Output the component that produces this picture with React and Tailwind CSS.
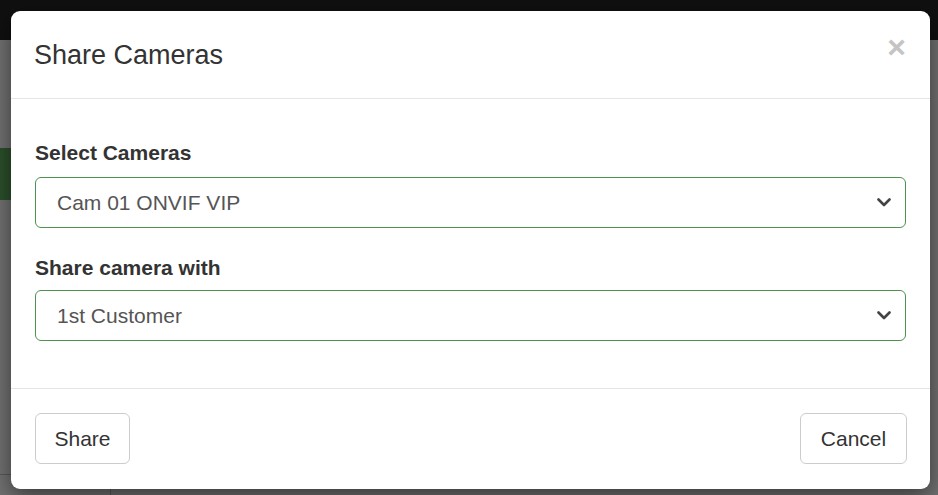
import React from "react";

function Chevron() {
  return (
    <svg width="14" height="9" viewBox="0 0 14 9" className="shrink-0">
      <path d="M1.5 1.5 L7 7 L12.5 1.5" fill="none" stroke="#444" strokeWidth="2.6" strokeLinecap="round" strokeLinejoin="round" />
    </svg>
  );
}

function SelectBox({ value }) {
  return (
    <div className="flex h-[51px] items-center justify-between rounded-[6px] border border-[#4f914f] pl-[21px] pr-[14px] text-[21px] text-[#555]">
      <span>{value}</span>
      <Chevron />
    </div>
  );
}

export default function App() {
  return (
    <div
      className="relative h-[495px] w-[938px] overflow-hidden bg-[#717171]"
      style={{ fontFamily: '"Liberation Sans", Arial, sans-serif' }}
    >
      {/* background page (dimmed) */}
      <div className="flex h-full flex-col">
        <div className="h-[40px] bg-[#101010]" />
        <div className="flex flex-1">
          <div className="flex w-[11px] flex-col">
            <div className="h-[108px]" />
            <div className="h-[52px] bg-[#2b4f2a]" />
            <div className="h-[274px]" />
            <div className="h-[1px] bg-[#585858]" />
          </div>
          <div className="flex-1" />
        </div>
        <div className="flex h-[6px]">
          <div className="w-[110px]" />
          <div className="w-[1px] bg-[#585858]" />
        </div>
      </div>

      {/* modal */}
      <div className="absolute left-[11px] top-[11px] flex h-[478px] w-[919px] flex-col rounded-[9px] bg-white shadow-[0_7px_22px_rgba(0,0,0,0.5)]">
        <div className="flex h-[88px] items-center justify-between border-b border-[#e5e5e5] pl-[23px] pr-[24px]">
          <span className="text-[27px] leading-[38px] text-[#333]">Share Cameras</span>
          <span className="mb-[16px] text-[32px] font-bold leading-none text-[#c4c4c4]">×</span>
        </div>

        <div className="flex flex-col px-[24px] pb-[47px] pt-[39px]">
          <div className="mb-[9px] text-[21px] font-bold leading-[30px] text-[#333]">Select Cameras</div>
          <SelectBox value="Cam 01 ONVIF VIP" />
          <div className="mb-[7px] mt-[25px] text-[21px] font-bold leading-[30px] text-[#333]">Share camera with</div>
          <SelectBox value="1st Customer" />
        </div>

        <div className="flex items-start justify-between border-t border-[#e5e5e5] pl-[24px] pr-[23px] pt-[24px]">
          <button className="flex h-[51px] w-[95px] items-center justify-center rounded-[6px] border border-[#cccccc] bg-white text-[21px] text-[#333]">
            Share
          </button>
          <button className="flex h-[51px] w-[107px] items-center justify-center rounded-[6px] border border-[#cccccc] bg-white text-[21px] text-[#333]">
            Cancel
          </button>
        </div>
      </div>
    </div>
  );
}
